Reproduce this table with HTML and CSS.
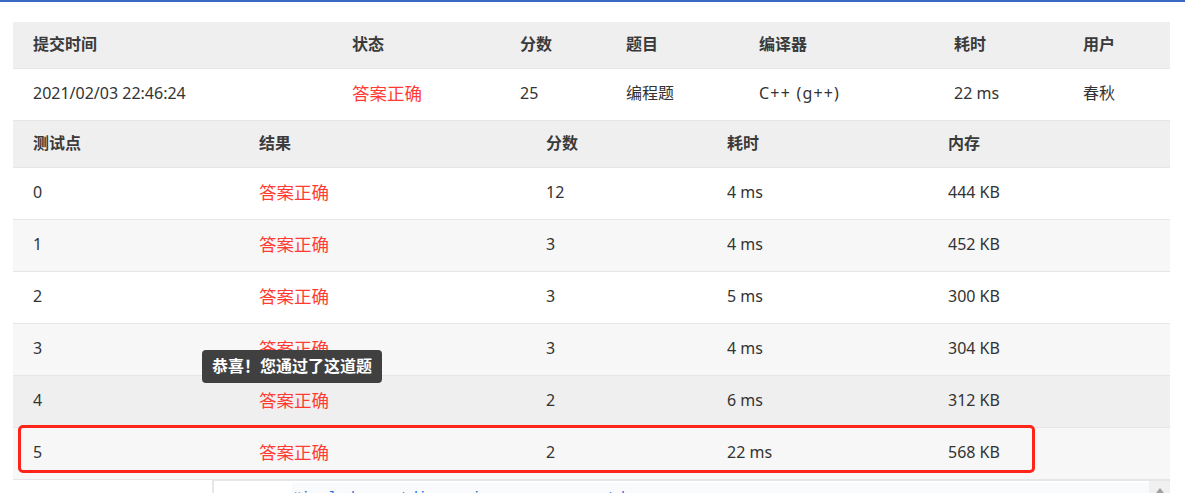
FILE: index.html
```html
<!DOCTYPE html>
<html lang="zh">
<head>
<meta charset="utf-8">
<link rel="stylesheet" href="styles.css">
</head>
<body>
<div class="topbar"></div>
<div class="page">
  <div class="tbl summary">
    <div class="row head">
      <div>提交时间</div><div>状态</div><div>分数</div><div>题目</div><div>编译器</div><div>耗时</div><div>用户</div>
    </div>
    <div class="row">
      <div>2021/02/03 22:46:24</div><div class="ok">答案正确</div><div>25</div><div>编程题</div><div class="lang">C++ (g++)</div><div>22 ms</div><div>春秋</div>
    </div>
  </div>
  <div class="tbl cases">
    <div class="row head">
      <div>测试点</div><div>结果</div><div>分数</div><div>耗时</div><div>内存</div>
    </div>
    <div class="row">
      <div>0</div><div class="ok">答案正确</div><div>12</div><div>4 ms</div><div>444 KB</div>
    </div>
    <div class="row stripe">
      <div>1</div><div class="ok">答案正确</div><div>3</div><div>4 ms</div><div>452 KB</div>
    </div>
    <div class="row">
      <div>2</div><div class="ok">答案正确</div><div>3</div><div>5 ms</div><div>300 KB</div>
    </div>
    <div class="row stripe">
      <div>3</div><div class="ok">答案正确</div><div>3</div><div>4 ms</div><div>304 KB</div>
    </div>
    <div class="row hover">
      <div>4</div><div class="ok">答案正确</div><div>2</div><div>6 ms</div><div>312 KB</div>
    </div>
    <div class="row stripe">
      <div>5</div><div class="ok">答案正确</div><div>2</div><div>22 ms</div><div>568 KB</div>
    </div>
    <div class="tooltip">恭喜！您通过了这道题</div>
    <div class="highlight"></div>
  </div>
  <div class="below">
    <div class="editor">
      <div class="code">#include &lt;cstdio&gt; using namespace std;</div>
    </div>
    <div class="scroll"><span class="arrow"></span></div>
  </div>
</div>
</body>
</html>
```
FILE: styles.css
```css
html, body {
  margin: 0;
  padding: 0;
  background: #fff;
  overflow: hidden;
}
body {
  font-family: "Noto Sans", "Noto Sans CJK SC", sans-serif;
  font-size: 16px;
  color: #333;
}
.topbar {
  height: 2px;
  background: #3b69c2;
}
.page {
  padding: 20px 15px 0 13px;
}
.tbl {
  position: relative;
  width: 1157px;
}
.row {
  display: grid;
  box-sizing: border-box;
  height: 52px;
  padding-bottom: 3px;
  border-bottom: 1px solid #e6e6e6;
  align-items: center;
  background: #fff;
}
.row.head {
  height: 47px;
  background: #efefef;
  font-weight: bold;
  color: #3a3a3a;
}
.row.stripe { background: #f7f7f7; }
.row.hover { background: #efefef; }
.row > div {
  padding-left: 20px;
  white-space: nowrap;
  line-height: 22px;
}
.summary .row {
  grid-template-columns: 319px 168px 106px 133px 195px 129px 107px;
}
.cases .row {
  grid-template-columns: 226px 287px 181px 221px 242px;
}
.lang {
  letter-spacing: 1.2px;
}
.ok {
  color: #ff3b33;
  font-size: 17.5px;
}
.tooltip {
  position: absolute;
  left: 189px;
  top: 229px;
  height: 33px;
  line-height: 33px;
  padding: 0 10px;
  background: #404040;
  color: #fff;
  font-weight: bold;
  font-size: 16px;
  border-radius: 4px;
}
.highlight {
  position: absolute;
  left: 5px;
  top: 304px;
  width: 1011px;
  height: 42px;
  border: 3px solid #ff2419;
  border-radius: 5px;
}
.below {
  display: flex;
  height: 20px;
}
.editor {
  margin-left: 199px;
  width: 935px;
  border-left: 2px solid #e6e6e6;
  border-top: 1px solid #e6e6e6;
  background: #fff;
  overflow: hidden;
}
.code {
  margin: 2px 0 0 78px;
  background: #f8fafc;
  color: #1a6fd6;
  font-family: "Liberation Mono", monospace;
  font-size: 15px;
  line-height: 20px;
  padding-top: 6px;
}
.scroll {
  width: 21px;
  background: #f0f0f0;
  border-top: 1px solid #e6e6e6;
  position: relative;
}
.arrow {
  position: absolute;
  left: 7px;
  top: 7px;
  width: 0;
  height: 0;
  border-left: 4px solid transparent;
  border-right: 4px solid transparent;
  border-bottom: 5px solid #a0a0a0;
}
```
